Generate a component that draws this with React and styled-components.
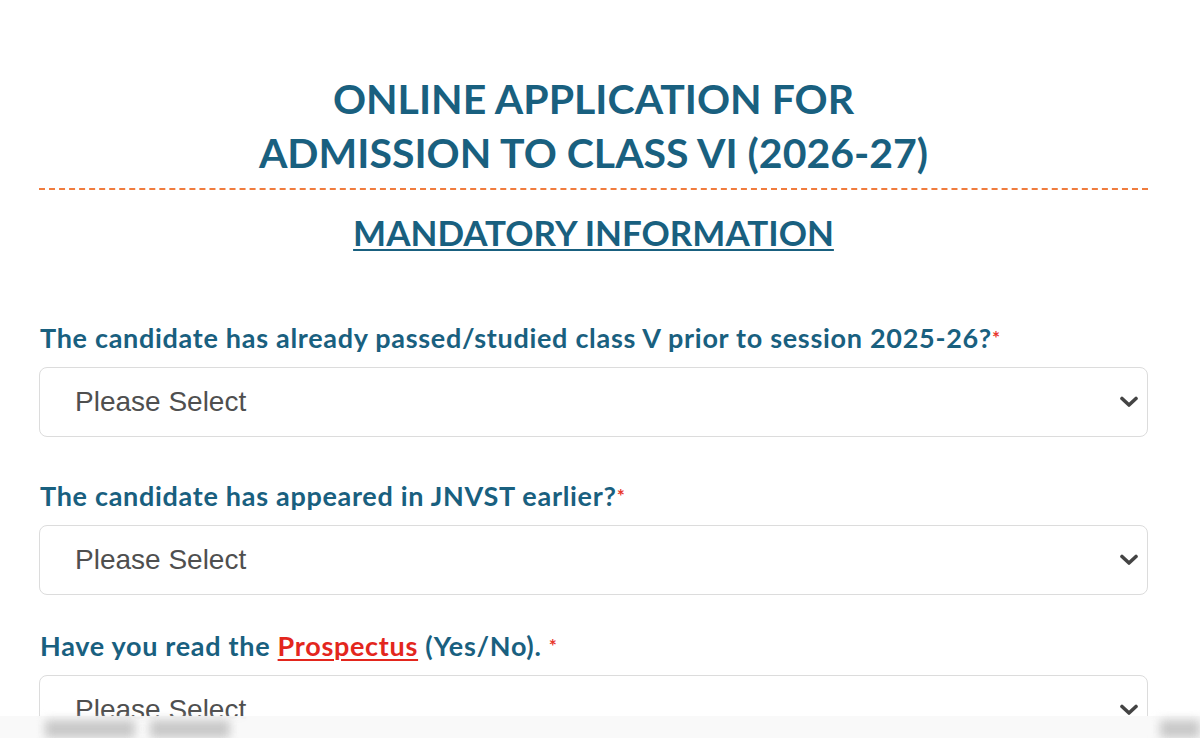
import React from 'react'
import styled, { createGlobalStyle } from 'styled-components'

const Global = createGlobalStyle`
  body {
    margin: 0;
    background: #fff;
    font-family: 'Lato', 'Open Sans', sans-serif;
  }
`;

const Page = styled.div`
  padding: 72px 52px 0 39px;
  min-height: 738px;
  box-sizing: border-box;
  overflow: hidden;
`;

const Title = styled.h1`
  margin: 0;
  text-align: center;
  font-size: 41px;
  line-height: 54px;
  font-weight: 700;
  color: #19607f;
`;

const Divider = styled.hr`
  border: none;
  border-top: 2px dashed #f07c3e;
  margin: 8px 0 0 0;
`;

const SubTitle = styled.h2`
  margin: 20px 0 0;
  text-align: center;
  font-size: 35px;
  line-height: 44px;
  font-weight: 700;
  color: #19607f;
  text-decoration: underline;
  text-decoration-thickness: 2px;
  text-underline-offset: 3px;
`;

const Form = styled.form`
  display: flex;
  flex-direction: column;
  margin-top: 68px;
`;

const Field = styled.div`
  display: flex;
  flex-direction: column;
  gap: 13px;
  margin-top: ${(p) => p.$space || 0}px;
`;

const Label = styled.label`
  font-size: 27px;
  line-height: 32px;
  font-weight: 700;
  letter-spacing: 0.7px;
  color: #19607f;
  padding-left: 1px;
`;

const Star = styled.span`
  color: #e8362c;
  font-size: 19px;
  vertical-align: top;
`;

const Link = styled.a`
  color: #e3261d;
  text-decoration: underline;
  text-decoration-thickness: 2px;
  text-underline-offset: 3px;
`;

const SelectBox = styled.div`
  position: relative;
  height: 70px;
  border: 1.5px solid #dcdcdc;
  border-radius: 8px;
  box-sizing: border-box;
  display: flex;
  align-items: center;
  padding: 0 9px 0 35px;
  background: #fff;
`;

const SelectText = styled.span`
  flex: 1;
  font-family: 'Liberation Sans', Arial, sans-serif;
  font-size: 28px;
  color: #4f4f4f;
`;

const Chevron = () => (
  <svg width="18" height="12" viewBox="0 0 18 12">
    <path d="M2 2.5 L9 9 L16 2.5" fill="none" stroke="#444" strokeWidth="3.6" strokeLinecap="round" strokeLinejoin="round" />
  </svg>
);

const Overlay = styled.div`
  position: fixed;
  left: 0;
  right: 0;
  bottom: 0;
  height: 22px;
  background: rgba(248, 248, 248, 0.92);
  backdrop-filter: blur(4px);
`;

const Blob = styled.span`
  position: absolute;
  top: 4px;
  height: 18px;
  background: #c9c9c9;
  filter: blur(5px);
`;

const Select = () => (
  <SelectBox>
    <SelectText>Please Select</SelectText>
    <Chevron />
  </SelectBox>
);

export default function App() {
  return (
    <>
      <Global />
      <Page>
        <Title>
          ONLINE APPLICATION FOR
          <br />
          ADMISSION TO CLASS VI (2026-27)
        </Title>
        <Divider />
        <SubTitle>MANDATORY INFORMATION</SubTitle>
        <Form>
          <Field>
            <Label>
              The candidate has already passed/studied class V prior to session 2025-26?<Star>*</Star>
            </Label>
            <Select />
          </Field>
          <Field $space={43}>
            <Label>
              The candidate has appeared in JNVST earlier?<Star>*</Star>
            </Label>
            <Select />
          </Field>
          <Field $space={35}>
            <Label>
              Have you read the <Link href="#">Prospectus</Link> (Yes/No). <Star>*</Star>
            </Label>
            <Select />
          </Field>
        </Form>
      </Page>
      <Overlay>
        <Blob style={{ left: 45, width: 90 }} />
        <Blob style={{ left: 150, width: 80 }} />
        <Blob style={{ left: 1160, width: 40 }} />
      </Overlay>
    </>
  )
}
